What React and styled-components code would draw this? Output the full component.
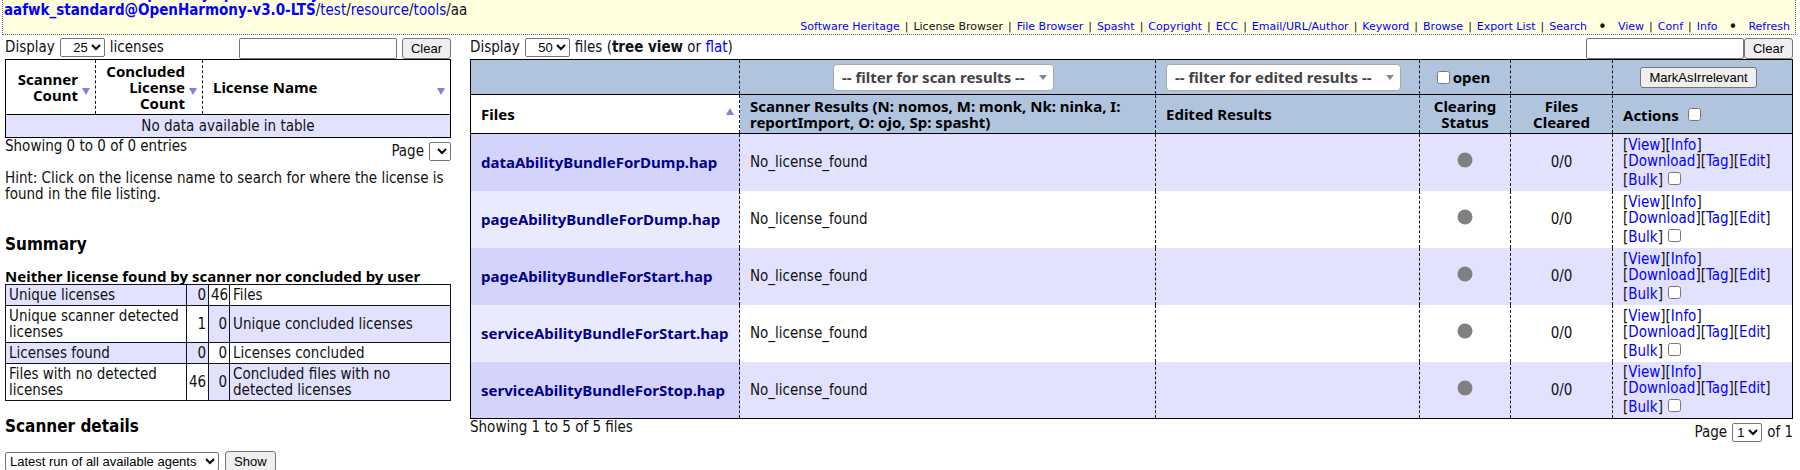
import React from "react";
import styled, { createGlobalStyle, css } from "styled-components";

const BODY_FONT = `"DejaVu Sans Condensed", "DejaVu Sans", sans-serif`;
const BOLD_FONT = `"Noto Sans", "DejaVu Sans", sans-serif`;
const CONTROL_FONT = `"Liberation Sans", Arial, sans-serif`;

const GlobalStyle = createGlobalStyle`
  *, *::before, *::after { box-sizing: border-box; }
  body {
    margin: 0;
    background: #fff;
    color: #111;
    font: 15px/16px ${BODY_FONT};
  }
  #root { overflow: hidden; }
  button, input, select { font-family: ${CONTROL_FONT}; }
`;

const Link = styled.a`
  color: #00f;
  text-decoration: none;
`;

const PathBar = styled.header`
  margin: -15px 4px 0 2px;
  background: #ffffe0;
  border: 1px dotted #666;
  border-top: 0;
`;

const Path = styled.div`
  padding: 1px 0 0 1px;
`;

const Nav = styled.nav`
  display: flex;
  justify-content: flex-end;
  gap: 5px;
  padding: 2px 5px 0 0;
  font: 11px/14px "DejaVu Sans", sans-serif;
  white-space: nowrap;
`;

const Bullet = styled.span`
  margin: 0 6px;
  font-size: 15px;
`;

const Columns = styled.main`
  display: grid;
  grid-template-columns: minmax(420px, 446fr) 1323fr;
  gap: 19px;
  padding: 3px 7px 0 5px;
`;

const Panel = styled.section`
  min-width: 0;
`;

const Toolbar = styled.div`
  display: flex;
  align-items: flex-start;
  justify-content: space-between;
  height: 21px;
`;

const Group = styled.div`
  display: flex;
  gap: ${(p) => p.$gap || 0}px;
`;

const Sentence = styled.label`
  display: flex;
  gap: 5px;
  line-height: 19px;
`;

const Select = styled.select`
  height: 19px;
  width: ${(p) => p.$width}px;
  border: 1px solid #767676;
  border-radius: 2px;
  background: #fff;
  color: #000;
  font-size: 13px;
  padding: 0;
  text-align: ${(p) => p.$align || "left"};
`;

const SearchBox = styled.input`
  width: 158px;
  height: 21px;
  border: 1px solid #767676;
  border-radius: 2px;
`;

const Button = styled.button`
  height: 21px;
  padding: 0 8px;
  border: 1px solid #767676;
  border-radius: 3px;
  background: #efefef;
  color: #000;
  font-size: 13px;
`;

const Checkbox = styled.input.attrs({ type: "checkbox" })`
  width: 13px;
  height: 13px;
  margin: 3px 3px 3px 5px;
`;

const Table = styled.table`
  width: 100%;
  border-collapse: collapse;
  table-layout: fixed;
  border: 1px solid #000;
`;

const cell = css`
  padding: 0 10px;
  border-left: 1px dashed #112;
  text-align: ${(p) => p.$align || "left"};
`;

const HeadRow = styled.tr`
  height: ${(p) => p.$height}px;
  border-bottom: 1px solid #000;
  background: ${(p) => (p.$plain ? "#fff" : "#b0c4de")};
`;

const HeadCell = styled.th`
  ${cell}
  color: #000;
  font-family: ${BOLD_FONT};
  ${(p) => p.$white && "background: #fff;"}
`;

const SortLabel = styled.span`
  display: flex;
  align-items: center;
  justify-content: space-between;
  gap: 4px;
  margin-right: -5px;
  > span { flex: 1; }
`;

const BodyRow = styled.tr`
  height: 57px;
  background: ${(p) => (p.$odd ? "#e2e2ff" : "#fff")};
`;

const BodyCell = styled.td`
  ${cell}
`;

const FileCell = styled.th`
  ${cell}
  background: ${(p) => (p.$odd ? "#d3d3fc" : "#eaeaff")};
  color: #00008b;
  font-family: ${BOLD_FONT};
`;

const EmptyCell = styled.td`
  height: 23px;
  background: #e2e2ff;
  text-align: center;
`;

const Triangle = styled.svg`
  flex: none;
  width: 8px;
  height: 7px;
  margin-top: ${(p) => (p.$up ? -6 : 8)}px;
  fill: #8080dd;
`;

const FilterBox = styled.span`
  position: relative;
  display: inline-block;
  margin-right: 8px;
`;

const FilterSelect = styled.select`
  appearance: none;
  display: block;
  width: ${(p) => p.$width}px;
  height: 27px;
  padding: 0 20px 0 8px;
  border: 1px solid #aaa;
  border-radius: 4px;
  background: #fff;
  color: #444;
  font: bold 15px ${BOLD_FONT};
`;

const FilterArrow = styled.svg`
  position: absolute;
  right: 7px;
  top: 11px;
  width: 8px;
  height: 5px;
  fill: #888;
  pointer-events: none;
`;

const InlineLabel = styled.label`
  display: inline-flex;
  align-items: center;
  margin-right: 8px;
`;

const Status = styled.svg`
  display: block;
  width: 16px;
  height: 16px;
  margin: -4px auto 0;
  fill: #808080;
`;

const Actions = styled.div`
  white-space: nowrap;
`;

const Footer = styled.div`
  display: flex;
  align-items: flex-start;
  justify-content: space-between;
`;

const Pager = styled(Sentence)`
  margin-top: 4px;
`;

const Hint = styled.p`
  margin: 9px 0 0;
`;

const Heading = styled.h3`
  margin: ${(p) => p.$top}px 0 0;
  font-size: 17px;
  line-height: 18px;
  color: #000;
`;

const SummaryTable = styled.table`
  width: 100%;
  border-collapse: collapse;
  table-layout: fixed;
  caption {
    padding-top: 15px;
    color: #000;
    text-align: left;
    font: bold 15px/16px ${BOLD_FONT};
  }
`;

const SummaryRow = styled.tr`
  height: ${(p) => (p.$tall ? 37 : 21)}px;
`;

const SummaryCell = styled.td`
  padding: 0 ${(p) => (p.$num ? 2 : 3)}px;
  border: 1px solid #112;
  background: ${(p) => (p.$tint ? "#e2e2ff" : "#fff")};
  text-align: ${(p) => (p.$num ? "right" : "left")};
`;

const AgentForm = styled.div`
  display: flex;
  align-items: center;
  gap: 6px;
  margin-top: 16px;
`;

const navItems = ["License Browser", "File Browser", "Spasht", "Copyright", "ECC", "Email/URL/Author", "Keyword", "Browse", "Export List", "Search"];

const files = [
  "dataAbilityBundleForDump.hap",
  "pageAbilityBundleForDump.hap",
  "pageAbilityBundleForStart.hap",
  "serviceAbilityBundleForStart.hap",
  "serviceAbilityBundleForStop.hap",
];

const summary = [
  ["Unique licenses", 0, 46, "Files"],
  ["Unique scanner detected licenses", 1, 0, "Unique concluded licenses"],
  ["Licenses found", 0, 0, "Licenses concluded"],
  ["Files with no detected licenses", 46, 0, "Concluded files with no detected licenses"],
];

const SortMark = ({ up }) => (
  <Triangle $up={up} viewBox="0 0 8 7" aria-hidden="true">
    <path d={up ? "M4 0L8 7H0z" : "M0 0H8L4 7z"} />
  </Triangle>
);

const Filter = ({ label, width }) => (
  <FilterBox>
    <FilterSelect $width={width} aria-label={label}>
      <option>-- {label} --</option>
    </FilterSelect>
    <FilterArrow viewBox="0 0 8 5" aria-hidden="true"><path d="M0 0H8L4 5z" /></FilterArrow>
  </FilterBox>
);

const Action = ({ children }) => <>[<Link href="#">{children}</Link>]</>;

function LicensePanel() {
  return (
    <Panel>
      <Toolbar>
        <Sentence>
          Display
          <Select $width={45} $align="right"><option>25</option></Select>
          licenses
        </Sentence>
        <Group $gap={5}>
          <SearchBox aria-label="Search licenses" />
          <Button>Clear</Button>
        </Group>
      </Toolbar>
      <Table>
        <colgroup><col width="90" /><col width="107" /><col /></colgroup>
        <thead>
          <HeadRow $height={55} $plain>
            <HeadCell $align="right"><SortLabel><span>Scanner Count</span><SortMark /></SortLabel></HeadCell>
            <HeadCell $align="right"><SortLabel><span>Concluded License Count</span><SortMark /></SortLabel></HeadCell>
            <HeadCell><SortLabel><span>License Name</span><SortMark /></SortLabel></HeadCell>
          </HeadRow>
        </thead>
        <tbody>
          <tr><EmptyCell colSpan={3}>No data available in table</EmptyCell></tr>
        </tbody>
      </Table>
      <Footer>
        <span>Showing 0 to 0 of 0 entries</span>
        <Pager>Page <Select $width={22} /></Pager>
      </Footer>
      <Hint>Hint: Click on the license name to search for where the license is found in the file listing.</Hint>
      <Heading $top={33}>Summary</Heading>
      <SummaryTable>
        <caption>Neither license found by scanner nor concluded by user</caption>
        <colgroup><col /><col width="22" /><col width="21" /><col width="221" /></colgroup>
        <tbody>
          {summary.map(([a, n, m, b], i) => (
            <SummaryRow key={a} $tall={i % 2 === 1}>
              <SummaryCell $tint={i % 2 === 0}>{a}</SummaryCell>
              <SummaryCell $num $tint={i % 2 === 0}>{n}</SummaryCell>
              <SummaryCell $num $tint={i % 2 === 1}>{m}</SummaryCell>
              <SummaryCell $tint={i % 2 === 1}>{b}</SummaryCell>
            </SummaryRow>
          ))}
        </tbody>
      </SummaryTable>
      <Heading $top={16}>Scanner details</Heading>
      <AgentForm>
        <Select $width={214} aria-label="Agent run"><option>Latest run of all available agents</option></Select>
        <Button>Show</Button>
      </AgentForm>
    </Panel>
  );
}

function FilePanel() {
  return (
    <Panel>
      <Toolbar>
        <Sentence>
          Display
          <Select $width={45} $align="right"><option>50</option></Select>
          <span>files (<b>tree view</b> or <Link href="#">flat</Link>)</span>
        </Sentence>
        <Group>
          <SearchBox aria-label="Search files" />
          <Button>Clear</Button>
        </Group>
      </Toolbar>
      <Table>
        <colgroup><col width="269" /><col /><col width="264" /><col width="91" /><col width="102" /><col width="180" /></colgroup>
        <thead>
          <HeadRow $height={35}>
            <HeadCell />
            <HeadCell $align="center"><Filter label="filter for scan results" width={221} /></HeadCell>
            <HeadCell $align="center"><Filter label="filter for edited results" width={235} /></HeadCell>
            <HeadCell $align="center"><InlineLabel><Checkbox />open</InlineLabel></HeadCell>
            <HeadCell />
            <HeadCell $align="center"><InlineLabel as="span"><Button>MarkAsIrrelevant</Button></InlineLabel></HeadCell>
          </HeadRow>
          <HeadRow $height={39}>
            <HeadCell $white><SortLabel><span>Files</span><SortMark up /></SortLabel></HeadCell>
            <HeadCell>Scanner Results (N: nomos, M: monk, Nk: ninka, I: reportImport, O: ojo, Sp: spasht)</HeadCell>
            <HeadCell>Edited Results</HeadCell>
            <HeadCell $align="center">Clearing Status</HeadCell>
            <HeadCell $align="center">Files Cleared</HeadCell>
            <HeadCell><label>Actions <Checkbox /></label></HeadCell>
          </HeadRow>
        </thead>
        <tbody>
          {files.map((name, i) => (
            <BodyRow key={name} $odd={i % 2 === 0}>
              <FileCell $odd={i % 2 === 0} scope="row">{name}</FileCell>
              <BodyCell>No_license_found</BodyCell>
              <BodyCell />
              <BodyCell><Status viewBox="0 0 16 16" aria-label="Not cleared"><circle cx="8" cy="8" r="7.5" /></Status></BodyCell>
              <BodyCell $align="center">0/0</BodyCell>
              <BodyCell>
                <Actions>
                  <Action>View</Action><Action>Info</Action><br />
                  <Action>Download</Action><Action>Tag</Action><Action>Edit</Action><br />
                  <Action>Bulk</Action><Checkbox aria-label={`Select ${name}`} />
                </Actions>
              </BodyCell>
            </BodyRow>
          ))}
        </tbody>
      </Table>
      <Footer>
        <span>Showing 1 to 5 of 5 files</span>
        <Pager>Page <Select $width={30}><option>1</option></Select> of 1</Pager>
      </Footer>
    </Panel>
  );
}

export default function App() {
  return (
    <>
      <GlobalStyle />
      <PathBar>
        <Path>
          Folder: <Link href="#"><b>Software Repository</b></Link>/<Link href="#"><b>openharmony</b></Link>/<br />
          <Link href="#"><b>aafwk_standard@OpenHarmony-v3.0-LTS</b></Link>/<Link href="#">test</Link>/<Link href="#">resource</Link>/<Link href="#">tools</Link>/aa
        </Path>
        <Nav>
          <Link href="#">Software Heritage</Link>
          {navItems.map((item, i) => (
            <React.Fragment key={item}>
              <span>|</span>
              {i === 0 ? <span>{item}</span> : <Link href="#">{item}</Link>}
            </React.Fragment>
          ))}
          <Bullet>•</Bullet>
          <Link href="#">View</Link><span>|</span><Link href="#">Conf</Link><span>|</span><Link href="#">Info</Link>
          <Bullet>•</Bullet>
          <Link href="#">Refresh</Link>
        </Nav>
      </PathBar>
      <Columns>
        <LicensePanel />
        <FilePanel />
      </Columns>
    </>
  );
}
